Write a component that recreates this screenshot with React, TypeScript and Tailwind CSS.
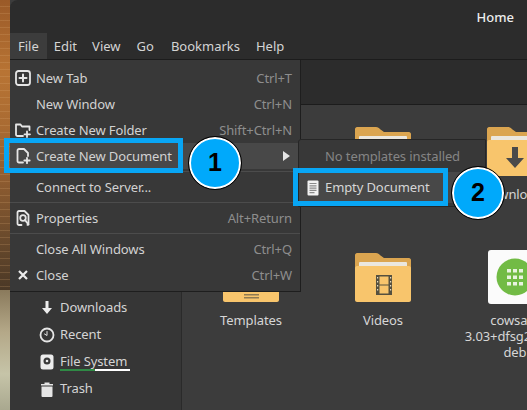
import React from "react";

const Folder = ({ glyph }: { glyph?: React.ReactNode }) => (
  <svg width="56" height="49" viewBox="0 0 56 49">
    <path d="M2 0h19c2 0 3 1 4.500 2.500L29 5h25c1 0 2 1 2 2v20H0V2c0-1 1-2 2-2z" fill="#dba550" />
    <rect x="4" y="9" width="48" height="12" rx="1" fill="#ebe7de" />
    <path d="M0 15c0-1 1-2 2-2h52c1 0 2 1 2 2v32c0 1-1 2-2 2H2c-1 0-2-1-2-2z" fill="#f8c56c" />
    {glyph}
  </svg>
);

const DownloadGlyph = <path d="M25 20h6v11h6l-9 10-9-10h6z" fill="#4a4a4a" />;
const VideoGlyph = (
  <g>
    <rect x="21" y="22" width="16" height="20" fill="#55503f" />
    <rect x="24.500" y="23.500" width="9" height="8" fill="#f8c56c" />
    <rect x="24.500" y="32.500" width="9" height="8" fill="#f8c56c" />
    <g fill="#e8dcc0">
      <rect x="22" y="24" width="1.200" height="1.500" />
      <rect x="22" y="28" width="1.200" height="1.500" />
      <rect x="22" y="32" width="1.200" height="1.500" />
      <rect x="22" y="36" width="1.200" height="1.500" />
      <rect x="35" y="24" width="1.200" height="1.500" />
      <rect x="35" y="28" width="1.200" height="1.500" />
      <rect x="35" y="32" width="1.200" height="1.500" />
      <rect x="35" y="36" width="1.200" height="1.500" />
    </g>
  </g>
);
const TemplateGlyph = (
  <g fill="#8f7a52">
    <rect x="21" y="41" width="15" height="1.500" />
    <rect x="21" y="44" width="15" height="1.500" />
  </g>
);

const Icon = ({ children }: { children: React.ReactNode }) => (
  <svg width="16" height="16" viewBox="0 0 16 16" fill="none" stroke="#e6e6e6" strokeWidth="1.800" strokeLinecap="round" strokeLinejoin="round">
    {children}
  </svg>
);

const MenuRow = ({ icon, label, shortcut, active, arrow }: { icon?: React.ReactNode; label: string; shortcut?: string; active?: boolean; arrow?: boolean }) => (
  <div className={`flex items-center h-[26px] pl-[5px] pr-[8px] ${active ? "bg-[#484848]" : ""}`}>
    <span className="w-[16px] h-[16px] flex items-center justify-center">{icon}</span>
    <span className="ml-[5px] mt-[2px] text-[#d2d2d2] tracking-[-0.1px]">{label}</span>
    <span className="ml-auto mt-[2px] text-[#8e8e8e] tracking-[-0.1px]">{shortcut}</span>
    {arrow && <span className="w-0 h-0 border-y-[5.500px] border-y-transparent border-l-[7px] border-l-[#e4e4e4] mr-[2px]" />}
  </div>
);

const Sep = () => <div className="h-px bg-[#4c4c4c] my-[2px]" />;

const SideRow = ({ icon, label, spell }: { icon: React.ReactNode; label: string; spell?: boolean }) => (
  <div className="flex items-center h-[27px] pl-[29px]">
    <span className="w-[16px] h-[16px] flex items-center justify-center">{icon}</span>
    <span className="relative ml-[5px] text-[#d4d4d4] tracking-[-0.1px]">
      {label}
      {spell && (
        <span className="absolute left-0 top-[17px] flex h-[2px] w-[70px]">
          <span className="w-[35px] bg-[#2f8a45]" />
          <span className="flex-1 bg-white" />
        </span>
      )}
    </span>
  </div>
);

const GridItem = ({ icon, label }: { icon: React.ReactNode; label: React.ReactNode }) => (
  <div className="flex flex-col items-center w-[132px] h-[126px]">
    <div className="h-[54px] flex items-center justify-center">{icon}</div>
    <div className="mt-[8px] text-center leading-[16px] text-[#d6d6d6] whitespace-nowrap">{label}</div>
  </div>
);

const Badge = ({ n, className }: { n: string; className: string }) => (
  <div className={`absolute w-[52px] h-[52px] rounded-full bg-[#00a9fb] border-2 border-white outline-1 outline-black flex items-center justify-center text-black font-bold text-[25px] font-['Liberation_Sans',sans-serif] ${className}`}>
    {n}
  </div>
);

export default function App() {
  return (
    <div className="relative w-[527px] h-[410px] overflow-hidden flex text-[13px] font-['Noto_Sans',sans-serif] bg-[#3c3c3c]">
      <div className="w-[10px] shrink-0 flex flex-col">
        <div className="h-[290px] bg-[repeating-linear-gradient(180deg,#0000_0_6px,#e0b07a33_6px_7px),linear-gradient(180deg,#9a5a28_0%,#b87434_25%,#a86a32_45%,#8e5c30_62%,#6a4a2c_82%,#4a3826_100%)]" />
        <div className="flex-1 bg-[linear-gradient(180deg,#8a7a5c_0%,#b4a888_35%,#c6c4a8_70%,#a9a88f_100%)]" />
      </div>
      <div className="flex-1 min-w-0 flex flex-col rounded-tl-[8px] overflow-hidden bg-[#3c3c3c]">
        <div className="h-[33px] bg-[#2c2c2c] flex items-center justify-end pr-[13px] pt-[2px] text-[#eeeeee] font-medium">Home</div>
        <div className="h-[27px] bg-[#2c2c2c] flex items-center border-b border-[#1c1c1c] text-[#d4d4d4]">
          <span className="h-full flex items-center px-[8px] pt-[2px] bg-[#3c3c3c]">File</span>
          <span className="ml-[7px] pt-[2px]">Edit</span>
          <span className="ml-[15px] pt-[2px]">View</span>
          <span className="ml-[16px] pt-[2px]">Go</span>
          <span className="ml-[17px] pt-[2px]">Bookmarks</span>
          <span className="ml-[16px] pt-[2px]">Help</span>
        </div>
        <div className="h-[45px] bg-[#2c2c2c] border-b border-[#1c1c1c]" />
        <div className="flex-1 min-h-0 flex">
          <div className="w-[172px] shrink-0 bg-[#363636] border-r border-[#2a2a2a] flex flex-col justify-end pb-[8px]">
            <SideRow label="Downloads" icon={<svg width="16" height="16" viewBox="0 0 16 16"><path d="M6.500 1h3v7h3.500L8 14 3 8h3.500z" fill="#ececec" /></svg>} />
            <SideRow label="Recent" icon={<Icon><circle cx="8" cy="8" r="6.500" /><path d="M8 4.500V8.500L5.500 7" strokeWidth="1" /></Icon>} />
            <SideRow label="File System" spell icon={<svg width="16" height="16" viewBox="0 0 16 16"><rect x="1.500" y="0.500" width="13" height="15" rx="2.500" fill="#ececec" /><circle cx="8" cy="7" r="3.500" fill="#3a3a3a" /><circle cx="8" cy="7" r="1.300" fill="#ececec" /></svg>} />
            <SideRow label="Trash" icon={<svg width="16" height="16" viewBox="0 0 16 16"><path d="M2 3h12v1.500H2zM5.500 1.500h5V3h-5zM2.500 5.500h11V15a1 1 0 0 1-1 1h-9a1 1 0 0 1-1-1z" fill="#e6e6e6" /></svg>} />
          </div>
          <div className="flex-1 min-w-0 pl-[3px] pt-[19px] grid grid-cols-[repeat(3,132px)] content-start overflow-hidden tracking-[-0.1px]">
            <GridItem icon={<Folder />} label="Public" />
            <GridItem icon={<Folder />} label="Pictures" />
            <GridItem icon={<Folder glyph={DownloadGlyph} />} label="Downloads" />
            <GridItem icon={<Folder glyph={TemplateGlyph} />} label="Templates" />
            <GridItem icon={<Folder glyph={VideoGlyph} />} label="Videos" />
            <GridItem
              icon={
                <div className="w-[54px] h-[54px] bg-[#fbfbfb] rounded-[3px] flex items-center justify-center">
                  <svg width="38" height="38" viewBox="0 0 38 38">
                    <circle cx="19" cy="19" r="18.500" fill="#72bb45" />
                    <g fill="#e8f3df">
                      <rect x="11" y="11" width="4" height="3.500" />
                      <rect x="17" y="11" width="4" height="3.500" />
                      <rect x="23" y="11" width="4" height="3.500" />
                      <rect x="11" y="17.500" width="4" height="3.500" />
                      <rect x="17" y="17.500" width="4" height="3.500" />
                      <rect x="23" y="17.500" width="4" height="3.500" />
                      <rect x="11" y="24" width="4" height="3.500" />
                      <rect x="17" y="24" width="4" height="3.500" />
                      <rect x="23" y="24" width="4" height="3.500" />
                    </g>
                  </svg>
                </div>
              }
              label={<>cowsay_<br />3.03+dfsg2-8_all.<br />deb</>}
            />
          </div>
        </div>
      </div>

      {/* File menu */}
      <div className="absolute left-[10px] top-[60px] w-[291px] h-[232px] bg-[#383838] border-r border-b border-[#1e1e1e] py-[5px]">
        <MenuRow label="New Tab" shortcut="Ctrl+T" icon={<Icon><rect x="1" y="1" width="14" height="14" rx="2.500" /><path d="M8 4.500v7M4.500 8h7" strokeWidth="2" /></Icon>} />
        <MenuRow label="New Window" shortcut="Ctrl+N" />
        <MenuRow label="Create New Folder" shortcut="Shift+Ctrl+N" icon={<Icon><path d="M8 14H2.500A1.500 1.500 0 0 1 1 12.500V2.500h4.500L7 4.500h7.500V8" /><path d="M12 9.500v5.500M9.500 12.300h5.500" strokeWidth="1.800" /></Icon>} />
        <MenuRow label="Create New Document" active arrow icon={<Icon><path d="M8 14.500H4a1.500 1.500 0 0 1-1.500-1.500V2.500A1.500 1.500 0 0 1 4 1h5l4 4v3" /><path d="M12 9.800v5.400M9.300 12.500h5.400" strokeWidth="1.800" /></Icon>} />
        <Sep />
        <MenuRow label="Connect to Server..." />
        <Sep />
        <MenuRow label="Properties" shortcut="Alt+Return" icon={<Icon><path d="M6.500 15H4a1.500 1.500 0 0 1-1.500-1.500v-11A1.500 1.500 0 0 1 4 1h5.500L13.500 5v8.500a1.500 1.500 0 0 1-1 1.400" /><circle cx="8" cy="8" r="2.800" strokeWidth="1.800" /><path d="M10 10l3.500 4.500" strokeWidth="2" /></Icon>} />
        <Sep />
        <MenuRow label="Close All Windows" shortcut="Ctrl+Q" />
        <MenuRow label="Close" shortcut="Ctrl+W" icon={<svg width="10" height="10" viewBox="0 0 10 10"><path d="M1 1l8 8M9 1l-8 8" stroke="#ececec" strokeWidth="2.200" /></svg>} />
      </div>

      {/* Submenu */}
      <div className="absolute left-[298px] top-[139px] w-[188px] h-[68px] bg-[#383838] border border-[#262626] rounded-tl-[3px] flex flex-col pt-[3px] tracking-[-0.1px]">
        <div className="h-[26px] flex items-center pl-[26px] pt-[2px] text-[#858585]">No templates installed</div>
        <div className="mt-[3px] h-[31px] flex items-center pl-[8px] pt-[1px] bg-[#484848] text-[#d6d6d6]">
          <svg width="12" height="16" viewBox="0 0 12 16">
            <rect x="0.500" y="0.500" width="11" height="15" rx="1" fill="#f2f2f2" />
            <path d="M2.500 3.500h7M2.500 5.800h7M2.500 8.100h7M2.500 10.400h7M2.500 12.700h5" stroke="#8a8a8a" strokeWidth="1.200" />
          </svg>
          <span className="ml-[6px]">Empty Document</span>
        </div>
      </div>

      {/* Callouts */}
      <div className="absolute left-[4px] top-[138px] w-[179px] h-[35px] border-[5px] border-[#08a6f5]" />
      <div className="absolute left-[293px] top-[168px] w-[155px] h-[38px] border-[5px] border-[#08a6f5]" />
      <Badge n="1" className="left-[189px] top-[137px]" />
      <Badge n="2" className="left-[452px] top-[167px]" />
    </div>
  );
}
